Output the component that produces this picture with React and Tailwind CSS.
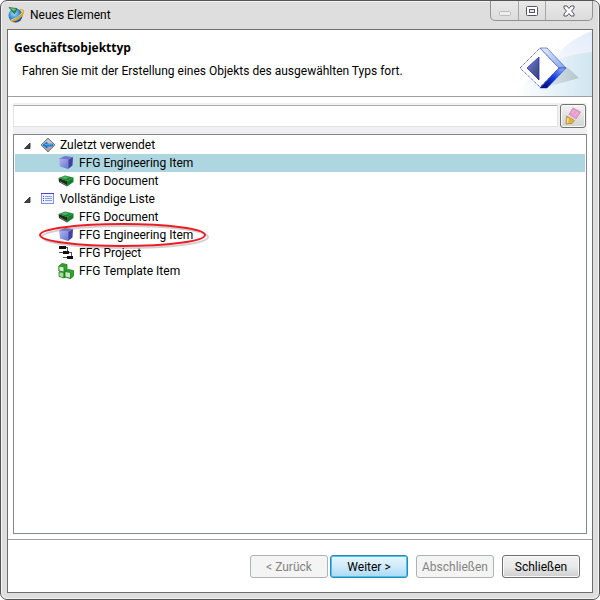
import React, { useState } from 'react';

const AppIcon = () => (
  <svg className="w-4 h-4" viewBox="0 0 16 16" aria-hidden="true">
    <defs>
      <radialGradient id="globe" cx="40%" cy="35%" r="70%">
        <stop offset="0" stopColor="#a8e4fa" />
        <stop offset="0.5" stopColor="#3f92d2" />
        <stop offset="1" stopColor="#123f86" />
      </radialGradient>
    </defs>
    <circle cx="7.5" cy="8.5" r="7" fill="url(#globe)" />
    <path d="M12 3Q17 3 14.5 7Q11 13 3 14" stroke="#e8a628" strokeWidth="1.8" fill="none" />
    <path d="M13 3.5Q16 4 13 7Q9 11.5 3 13" stroke="#ffe98c" strokeWidth="0.8" fill="none" />
    <path d="M1 0.500L9 1.500L6.500 7L1.500 1Z" fill="#2b8a43" stroke="#185c35" strokeWidth="0.6" />
    <path d="M2 1L8 2L6 4Z" fill="#7cc891" />
  </svg>
);

const RecentIcon = () => (
  <svg className="w-4 h-4" viewBox="0 0 16 16" aria-hidden="true">
    <path d="M8 1L15 8L8 15L1 8Z" fill="#a3a7ac" stroke="#73787e" />
    <path d="M8 2L14 8H2Z" fill="#c6cacd" />
    <path d="M3 8L7 5V7H12.500V9H7V11Z" fill="#1681ef" stroke="#0756b5" strokeWidth="0.6" />
    <path d="M5 7.700H12" stroke="#6ec5ff" strokeWidth="0.7" />
  </svg>
);

const ListIcon = () => (
  <svg className="w-4 h-4" viewBox="0 0 16 16" shapeRendering="crispEdges" aria-hidden="true">
    <path d="M1 2H14V13H1Z" fill="#eef2ff" />
    <path d="M1 2H14V3H1Z" fill="#4545c8" />
    <path d="M1 3H2V13H1ZM13 3H14V13H13ZM1 12H14V13H1Z" fill="#8292da" />
    <path d="M3 5H4V6H3ZM3 7H4V8H3ZM3 9H4V10H3Z" fill="#4545c8" />
    <path d="M5 5H12V6H5ZM5 7H12V8H5ZM5 9H12V10H5Z" fill="#8c9ce0" />
  </svg>
);

const CubeIcon = () => (
  <svg className="w-4 h-4" viewBox="0 0 16 16" aria-hidden="true">
    <defs>
      <linearGradient id="cubeFront" x1="0" y1="0" x2="1" y2="1">
        <stop offset="0" stopColor="#b9b6f4" />
        <stop offset="1" stopColor="#5e76c8" />
      </linearGradient>
    </defs>
    <path d="M1 3.500L7 1L15 2L10 5Z" fill="#7377cb" />
    <path d="M1 3.500L10 5V14L2 11.500Z" fill="url(#cubeFront)" />
    <path d="M10 5L15 2L14.500 10.500L10 14Z" fill="#4240a2" />
    <path d="M1 3.500L10 5V14" stroke="#9799e2" strokeWidth="0.6" fill="none" />
  </svg>
);

const BookIcon = () => (
  <svg className="w-4 h-4" viewBox="0 0 16 16" aria-hidden="true">
    <path d="M0.500 5L7 2.500L15.500 4.500L9 8Z" fill="#1c8a2e" />
    <path d="M3 4.800L7 3.200L11 4.200L7 6Z" fill="#56b862" />
    <path d="M0.500 5L9 8V13.500L1 9Z" fill="#1b2f1c" />
    <path d="M2 8.500L9 12.500" stroke="#a9b59f" strokeWidth="0.6" />
    <path d="M9 8L15.500 4.500V9L9 13.500Z" fill="#12802a" />
  </svg>
);

const ProjectIcon = () => (
  <svg className="w-4 h-4" viewBox="0 0 16 16" shapeRendering="crispEdges" aria-hidden="true">
    <path d="M1 1H8V4H1ZM5 6H11V9H5ZM9 11H15V14H9Z" fill="#101010" />
    <path d="M8 2H10V3H8ZM9 3H10V6H9ZM1 7H5V8H1ZM11 7H14V8H11ZM13 8H14V11H13ZM5 12H9V13H5Z" fill="#555" />
  </svg>
);

const TemplateIcon = () => (
  <svg className="w-4 h-4" viewBox="0 0 16 16" aria-hidden="true">
    <g stroke="#1d7d1c" strokeWidth="0.8" strokeLinejoin="round">
      <path d="M1 3L4 0.500L9 1.500V7L6 9L1 8Z" fill="#37a132" />
      <path d="M1 3L6 4V9L1 8Z" fill="#d3f0cb" />
      <path d="M1 9L6 9.500V15L1 13.500Z" fill="#a6df9b" />
      <path d="M6 9.500L8 8V13.500L6 15Z" fill="#248a22" />
      <path d="M7 8.500L10 6.500L15.500 7.500V13L13 15.500L7 14Z" fill="#37a132" />
      <path d="M7 8.500L12.500 9.500V15.300L7 14Z" fill="#c3ebb9" />
    </g>
  </svg>
);

const EraserIcon = () => (
  <svg className="w-5 h-5" viewBox="0 0 20 20" aria-hidden="true">
    <path d="M10 2L17.500 6L13 13L6 8.500Z" fill="#eb9dd0" stroke="#c881af" strokeWidth="0.8" />
    <path d="M5.500 8.500L12.500 13L11.500 15L4 10.500Z" fill="#dddcd5" />
    <path d="M3.500 10L11.500 14.500L9 17.500L3 18Z" fill="#e3b23a" stroke="#a8823a" strokeWidth="0.7" />
    <path d="M5 12L4.500 17" stroke="#ffe08a" strokeWidth="1.5" />
    <path d="M9 7L11.500 4M12 9L15 6" stroke="#f6c3e4" strokeWidth="0.8" />
  </svg>
);

const BannerArt = () => (
  <svg className="w-20 h-full shrink-0" viewBox="0 0 80 66" aria-hidden="true">
    <defs>
      <linearGradient id="bannerFade" x1="0" y1="0" x2="1" y2="0">
        <stop offset="0.05" stopColor="#fff" />
        <stop offset="1" stopColor="#d0e6f1" />
      </linearGradient>
      <linearGradient id="bannerTop" x1="0" y1="1" x2="1" y2="0">
        <stop offset="0.1" stopColor="#fff" />
        <stop offset="1" stopColor="#e4ebfa" />
      </linearGradient>
      <linearGradient id="shadowFade" x1="0" y1="0" x2="1" y2="0">
        <stop offset="0" stopColor="#dfeaee" />
        <stop offset="1" stopColor="#b3c5cb" />
      </linearGradient>
      <linearGradient id="sideLight" x1="0" y1="0" x2="1" y2="1">
        <stop offset="0" stopColor="#e8efff" />
        <stop offset="1" stopColor="#83a5ed" />
      </linearGradient>
      <linearGradient id="sideDark" x1="1" y1="0" x2="0" y2="1">
        <stop offset="0" stopColor="#9bbcff" />
        <stop offset="0.5" stopColor="#1236e6" />
        <stop offset="1" stopColor="#000960" />
      </linearGradient>
      <linearGradient id="arrowFill" x1="0" y1="0" x2="1" y2="1">
        <stop offset="0" stopColor="#787dec" />
        <stop offset="1" stopColor="#33415f" />
      </linearGradient>
    </defs>
    <path d="M80 1Q53 11 40 32L20 66H80Z" fill="url(#bannerTop)" />
    <path d="M80 22Q47 25 27 41Q9 53 0 66H80Z" fill="url(#bannerFade)" />
    <path d="M31 58L55 37L67 48Z" fill="url(#shadowFade)" />
    <path d="M28 18L47 38L28 57L8 38Z" fill="#fff" stroke="#2732bd" strokeDasharray="1 1" />
    <path d="M28 18H35L54 38H47Z" fill="url(#sideLight)" stroke="#586fb5" strokeWidth="0.8" />
    <path d="M47 38H54L35 58H28Z" fill="url(#sideDark)" stroke="#0a20a8" strokeWidth="0.5" />
    <path d="M27 27V50L15 38Z" fill="url(#arrowFill)" stroke="#2230bb" strokeWidth="0.8" />
  </svg>
);

const groups = [
  {
    title: 'Zuletzt verwendet',
    Icon: RecentIcon,
    items: [
      { label: 'FFG Engineering Item', Icon: CubeIcon, selected: true },
      { label: 'FFG Document', Icon: BookIcon },
    ],
  },
  {
    title: 'Vollständige Liste',
    Icon: ListIcon,
    items: [
      { label: 'FFG Document', Icon: BookIcon },
      { label: 'FFG Engineering Item', Icon: CubeIcon, marked: true },
      { label: 'FFG Project', Icon: ProjectIcon },
      { label: 'FFG Template Item', Icon: TemplateIcon },
    ],
  },
];

const Marker = () => (
  <svg
    className="absolute left-6 -top-1 w-[172px] h-7 pointer-events-none"
    viewBox="0 0 172 28"
    fill="none"
    aria-hidden="true"
  >
    <ellipse cx="86" cy="15" rx="83" ry="11" stroke="#777" strokeWidth="2" opacity="0.35" />
    <ellipse cx="83.5" cy="13" rx="82.5" ry="11" stroke="#ed1c24" strokeWidth="2" />
  </svg>
);

const TreeItem = ({ item }) => (
  <li
    role="treeitem"
    aria-selected={!!item.selected}
    className={`relative flex items-center gap-1 h-[18px] pl-[43px] ${item.selected ? 'bg-[#add6e0]' : ''}`}
  >
    <item.Icon />
    <span className="pl-px">{item.label}</span>
    {item.marked && <Marker />}
  </li>
);

const TreeGroup = ({ group }) => (
  <li role="treeitem" aria-expanded="true">
    <div className="flex items-center h-[18px] pl-2">
      <svg className="w-2 h-2 mr-[9px]" viewBox="0 0 8 8" aria-hidden="true">
        <path d="M7 2V7.500H1.500Z" fill="#444" stroke="#222" strokeWidth="0.8" />
      </svg>
      <group.Icon />
      <span className="pl-1">{group.title}</span>
    </div>
    <ul role="group">
      {group.items.map((item) => (
        <TreeItem key={item.label} item={item} />
      ))}
    </ul>
  </li>
);

const buttonStyles = {
  normal:
    'border-[#707070] bg-linear-to-b from-[#f2f2f2] from-0% via-[#e9e9e9] via-50% to-[#cfcfcf] text-black shadow-[inset_0_0_0_1px_#fafafa]',
  primary:
    'border-[#3c7fb1] bg-linear-to-b from-[#eaf6fd] from-0% via-[#cfeafa] via-50% to-[#a9daf5] text-black shadow-[inset_0_0_0_1px_#35cdf5]',
  disabled: 'border-[#adb2b5] bg-[#f4f4f4] text-[#838383]',
};

const DialogButton = ({ kind = 'normal', children }) => (
  <button
    type="button"
    disabled={kind === 'disabled'}
    className={`w-[78px] h-[23px] rounded-[3px] border text-center ${buttonStyles[kind]}`}
  >
    {children}
  </button>
);

const WindowButtons = () => (
  <div className="flex h-5 w-[103px] rounded-b-[5px] border border-t-0 border-[#929292] bg-linear-to-b from-[#e9e9e9] to-[#dcdcdc] overflow-hidden">
    <button type="button" aria-label="Minimieren" disabled className="flex items-center justify-center w-7 border-r border-[#a5a5a5]">
      <svg className="w-3 h-4" viewBox="0 0 12 16" aria-hidden="true">
        <rect x="0.5" y="8.5" width="11" height="4" rx="1" fill="#ededed" stroke="#bcbcbc" />
      </svg>
    </button>
    <button type="button" aria-label="Maximieren" className="flex items-center justify-center w-[27px] border-r border-[#a5a5a5]">
      <svg className="w-3 h-3" viewBox="0 0 12 12" aria-hidden="true">
        <rect x="0.5" y="1.5" width="11" height="9" rx="1" fill="#fff" stroke="#535666" />
        <rect x="3.5" y="4.5" width="5" height="3" fill="#e6e6e6" stroke="#535666" />
      </svg>
    </button>
    <button type="button" aria-label="Fenster schließen" className="flex items-center justify-center flex-1">
      <svg className="w-3 h-3" viewBox="0 0 12 12" aria-hidden="true">
        <path
          d="M1 1H4L6 3.500L8 1H11V3L8.500 6L11 9V11H8L6 8.500L4 11H1V9L3.500 6L1 3Z"
          fill="#fff"
          stroke="#535666"
        />
      </svg>
    </button>
  </div>
);

const App = () => {
  const [filter, setFilter] = useState('');

  return (
    <div className="min-h-screen flex flex-col rounded-[7px] border border-[#555] bg-[#dedede] px-1.5 pb-1.5 font-[Roboto,'Noto_Sans',sans-serif] text-[12px] leading-4 text-black shadow-[inset_0_0_0_1px_#f4f4f4]">
      <header className="flex items-start justify-between h-7">
        <div className="flex items-center gap-1.5 pl-px pt-1.5">
          <AppIcon />
          <h1>Neues Element</h1>
        </div>
        <WindowButtons />
      </header>

      <main className="flex-1 flex flex-col border border-[#6f6f6f] bg-white">
        <section className="flex justify-between h-[67px] border-b border-[#a0a0a0]">
          <div className="pl-1.5 pt-2.5">
            <h2 className="font-['Open_Sans','Noto_Sans',sans-serif] font-bold">Geschäftsobjekttyp</h2>
            <p className="pl-2 pt-[7px]">Fahren Sie mit der Erstellung eines Objekts des ausgewählten Typs fort.</p>
          </div>
          <BannerArt />
        </section>

        <div className="flex-1 flex flex-col px-[5px] pt-1.5 pb-[5px]">
          <div className="flex items-center gap-0.5 h-[31px] bg-[#f0f0f0] pb-1.5 pr-px">
            <input
              type="text"
              aria-label="Filter"
              value={filter}
              onChange={(e) => setFilter(e.target.value)}
              className="flex-1 min-w-0 h-[22px] px-1 bg-white border border-[#e2e3ea] border-t-[#abadb3] rounded-[1px] outline-none"
            />
            <button
              type="button"
              aria-label="Filter löschen"
              onClick={() => setFilter('')}
              className="flex items-center justify-center w-[26px] h-6 rounded-[3px] border border-[#707070] bg-linear-to-b from-[#f2f2f2] to-[#d4d4d4] shadow-[inset_0_0_0_1px_#fafafa]"
            >
              <EraserIcon />
            </button>
          </div>
          <ul role="tree" className="flex-1 border border-[#828790] p-px">
            {groups.map((group) => (
              <TreeGroup key={group.title} group={group} />
            ))}
          </ul>
        </div>

        <footer className="flex justify-end gap-2 h-[53px] border-t border-[#a0a0a0] pt-[15px] pr-3">
          <div className="flex gap-0.5">
            <DialogButton kind="disabled">&lt; Zurück</DialogButton>
            <DialogButton kind="primary">Weiter &gt;</DialogButton>
          </div>
          <DialogButton kind="disabled">Abschließen</DialogButton>
          <DialogButton>Schließen</DialogButton>
        </footer>
      </main>
    </div>
  );
};

export default App;
